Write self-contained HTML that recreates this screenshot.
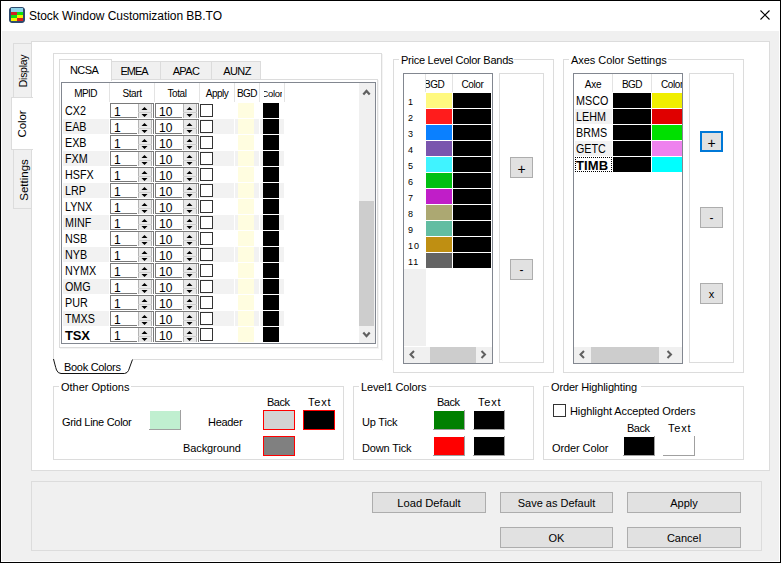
<!DOCTYPE html><html><head><meta charset="utf-8"><style>
html,body{margin:0;padding:0;width:781px;height:563px;overflow:hidden;background:#f0f0f0}
.a{position:absolute;box-sizing:border-box}
.t{font-family:"Liberation Sans",sans-serif;color:#000;white-space:nowrap}
svg{position:absolute;left:0;top:0}
</style></head><body>
<div class="a" style="left:0px;top:0px;width:781px;height:563px;background:#f0f0f0;"></div>
<div class="a" style="left:0px;top:0px;width:781px;height:31px;background:#fff;"></div>
<div class="a" style="left:1px;top:31px;width:1px;height:531px;background:#fff;"></div>
<div class="a" style="left:779px;top:31px;width:1px;height:531px;background:#fff;"></div>
<div class="a" style="left:1px;top:561px;width:779px;height:1px;background:#fff;"></div>
<div class="a" style="left:0px;top:0px;width:781px;height:1px;background:#000;"></div>
<div class="a" style="left:0px;top:0px;width:1px;height:563px;background:#000;"></div>
<div class="a" style="left:780px;top:0px;width:1px;height:563px;background:#000;"></div>
<div class="a" style="left:0px;top:562px;width:781px;height:1px;background:#000;"></div>
<svg width="781" height="563" style="position:absolute;left:0;top:0">
<rect x="9.5" y="7.5" width="15" height="15" rx="2.5" ry="2.5" fill="#2f4b6e" stroke="#2f4b6e"/>
<rect x="11" y="8" width="12" height="4" fill="#8fd3ea"/>
<rect x="11" y="12" width="6" height="3" fill="#d42020"/><rect x="17" y="12" width="6" height="3" fill="#10e010"/>
<rect x="11" y="15" width="6" height="3" fill="#10e010"/><rect x="17" y="15" width="6" height="3" fill="#f5f000"/>
<rect x="11" y="18" width="6" height="3" fill="#f5f000"/><rect x="17" y="18" width="6" height="3" fill="#d42020"/>
<path d="M760.5 10.5 L769.5 19.5 M769.5 10.5 L760.5 19.5" stroke="#000" stroke-width="1.1" fill="none"/>
</svg>
<div class="a t" style="left:29px;top:8.84px;font-size:12px;line-height:14px;letter-spacing:-0.05px">Stock Window Customization BB.TO</div>
<div class="a" style="left:13px;top:43px;width:19px;height:55px;background:#f0f0f0;border:1px solid #dcdcdc;"></div>
<div class="a" style="left:13px;top:149px;width:19px;height:60px;background:#f0f0f0;border:1px solid #dcdcdc;"></div>
<div class="a" style="left:31px;top:41px;width:739px;height:430px;background:#fff;border:1px solid #dcdcdc;"></div>
<div class="a" style="left:11px;top:97px;width:22px;height:53px;background:#fff;border:1px solid #dcdcdc;border-right:none;"></div>
<div class="a t" style="left:-27px;top:64px;width:100px;height:14px;line-height:14px;text-align:center;font-size:10.5px;transform:rotate(-90deg);letter-spacing:-0.3px">Display</div>
<div class="a t" style="left:-28px;top:117px;width:100px;height:14px;line-height:14px;text-align:center;font-size:11.5px;transform:rotate(-90deg);letter-spacing:-0.1px">Color</div>
<div class="a t" style="left:-26px;top:173px;width:100px;height:14px;line-height:14px;text-align:center;font-size:11.5px;transform:rotate(-90deg);letter-spacing:0px">Settings</div>
<div class="a" style="left:53px;top:53px;width:329px;height:307px;background:#fff;border:1px solid #dcdcdc;"></div>
<div class="a" style="left:382px;top:54px;width:1px;height:307px;background:#f4f4f4;"></div>
<svg width="781" height="563" style="position:absolute;left:0;top:0">
<rect x="54" y="359" width="79" height="2" fill="#fff"/>
<path d="M53.5 359 C54.5 363 55.5 367 56.5 370 Q58 373.5 61 373.5 L124.5 373.5 Q127.5 373 128.5 370.5 L132.5 359.5" stroke="#111" stroke-width="1" fill="#fff"/>
</svg>
<div class="a t" style="left:64px;top:360.69px;font-size:11px;line-height:13px;letter-spacing:-0.3px">Book Colors</div>
<div class="a" style="left:111px;top:61px;width:50px;height:19px;background:#f0f0f0;border:1px solid #dcdcdc;"></div>
<div class="a" style="left:160px;top:61px;width:52px;height:19px;background:#f0f0f0;border:1px solid #dcdcdc;"></div>
<div class="a" style="left:211px;top:61px;width:50px;height:19px;background:#f0f0f0;border:1px solid #dcdcdc;"></div>
<div class="a" style="left:59px;top:79px;width:319px;height:269px;background:#fff;border:1px solid #dcdcdc;"></div>
<div class="a" style="left:378px;top:80px;width:1px;height:269px;background:#f4f4f4;"></div>
<div class="a" style="left:60px;top:348px;width:319px;height:1px;background:#f4f4f4;"></div>
<div class="a" style="left:59px;top:59px;width:53px;height:22px;background:#fff;border:1px solid #dcdcdc;border-bottom:none;"></div>
<div class="a t" style="left:70px;top:63.69px;font-size:11px;line-height:13px;letter-spacing:-0.6px">NCSA</div>
<div class="a t" style="left:109px;width:50px;text-align:center;top:64.69px;font-size:11px;line-height:13px;letter-spacing:-1.1px">EMEA</div>
<div class="a t" style="left:161px;width:50px;text-align:center;top:64.69px;font-size:11px;line-height:13px;letter-spacing:-0.6px">APAC</div>
<div class="a t" style="left:213px;width:48px;text-align:center;top:64.69px;font-size:11px;line-height:13px;letter-spacing:-0.6px">AUNZ</div>
<div class="a" style="left:61px;top:82px;width:315px;height:262px;background:#fff;border:1px solid #828790;"></div>
<div class="a" style="left:109px;top:83px;width:1px;height:19px;background:#e3e3e3;"></div>
<div class="a" style="left:154px;top:83px;width:1px;height:19px;background:#e3e3e3;"></div>
<div class="a" style="left:199px;top:83px;width:1px;height:19px;background:#e3e3e3;"></div>
<div class="a" style="left:234px;top:83px;width:1px;height:19px;background:#e3e3e3;"></div>
<div class="a" style="left:259px;top:83px;width:1px;height:19px;background:#e3e3e3;"></div>
<div class="a" style="left:284px;top:83px;width:1px;height:19px;background:#e3e3e3;"></div>
<div class="a t" style="left:62px;width:47px;text-align:center;top:87.53px;font-size:10px;line-height:12px;letter-spacing:-0.6px">MPID</div>
<div class="a t" style="left:110px;width:44px;text-align:center;top:87.53px;font-size:10px;line-height:12px;letter-spacing:-0.4px">Start</div>
<div class="a t" style="left:155px;width:44px;text-align:center;top:87.53px;font-size:10px;line-height:12px;letter-spacing:-0.4px">Total</div>
<div class="a t" style="left:200px;width:34px;text-align:center;top:87.53px;font-size:10px;line-height:12px;letter-spacing:-0.5px">Apply</div>
<div class="a t" style="left:235px;width:24px;text-align:center;top:87.53px;font-size:10px;line-height:12px;letter-spacing:-0.5px">BGD</div>
<div class="a" style="left:264px;top:84px;width:18px;height:17px;overflow:hidden"><div class="a t" style="left:-2.5px;top:3.5px;font-size:9.5px;line-height:11px;letter-spacing:-0.3px">Color</div></div>
<div class="a t" style="left:65px;top:104.17px;font-size:12.5px;line-height:15px;transform:scaleX(0.86);transform-origin:0 0;">CX2</div>
<div class="a" style="left:110px;top:103px;width:44px;height:15px;background:#fff;border:1px solid #7a7a7a;border-bottom:none;"></div>
<div class="a" style="left:110px;top:117px;width:27px;height:1px;background:#7a7a7a;"></div>
<div class="a" style="left:138px;top:104px;width:14px;height:14px;background:#e9e9e9;"></div>
<div class="a" style="left:138px;top:104px;width:1px;height:14px;background:#b4b4b4;"></div>
<div class="a" style="left:151px;top:104px;width:1px;height:14px;background:#b4b4b4;"></div>
<div class="a" style="left:138px;top:112px;width:14px;height:1px;background:#cfcfcf;"></div>
<svg width="781" height="563"><path d="M141.5 110 L144.5 107 L147.5 110 Z M141.5 114 L144.5 117 L147.5 114 Z" fill="#000"/></svg>
<div class="a t" style="left:114px;top:104.84px;font-size:12px;line-height:14px;">1</div>
<div class="a" style="left:155px;top:103px;width:44px;height:15px;background:#fff;border:1px solid #7a7a7a;border-bottom:none;"></div>
<div class="a" style="left:155px;top:117px;width:27px;height:1px;background:#7a7a7a;"></div>
<div class="a" style="left:183px;top:104px;width:14px;height:14px;background:#e9e9e9;"></div>
<div class="a" style="left:183px;top:104px;width:1px;height:14px;background:#b4b4b4;"></div>
<div class="a" style="left:196px;top:104px;width:1px;height:14px;background:#b4b4b4;"></div>
<div class="a" style="left:183px;top:112px;width:14px;height:1px;background:#cfcfcf;"></div>
<svg width="781" height="563"><path d="M186.5 110 L189.5 107 L192.5 110 Z M186.5 114 L189.5 117 L192.5 114 Z" fill="#000"/></svg>
<div class="a t" style="left:159px;top:104.84px;font-size:12px;line-height:14px;">10</div>
<div class="a" style="left:200px;top:104px;width:13px;height:13px;background:#fff;border:1px solid #333;"></div>
<div class="a" style="left:238px;top:103px;width:16px;height:15px;background:#fffde0;"></div>
<div class="a" style="left:263px;top:103px;width:16px;height:15px;background:#000;"></div>
<div class="a" style="left:63px;top:119px;width:46px;height:15px;background:#f2f2f2;"></div>
<div class="a" style="left:110px;top:119px;width:44px;height:15px;background:#f2f2f2;"></div>
<div class="a" style="left:155px;top:119px;width:44px;height:15px;background:#f2f2f2;"></div>
<div class="a" style="left:200px;top:119px;width:34px;height:15px;background:#f2f2f2;"></div>
<div class="a" style="left:235px;top:119px;width:24px;height:15px;background:#f2f2f2;"></div>
<div class="a" style="left:260px;top:119px;width:24px;height:15px;background:#f2f2f2;"></div>
<div class="a t" style="left:65px;top:120.17px;font-size:12.5px;line-height:15px;transform:scaleX(0.86);transform-origin:0 0;">EAB</div>
<div class="a" style="left:110px;top:119px;width:44px;height:15px;background:#fff;border:1px solid #7a7a7a;border-bottom:none;"></div>
<div class="a" style="left:110px;top:133px;width:27px;height:1px;background:#7a7a7a;"></div>
<div class="a" style="left:138px;top:120px;width:14px;height:14px;background:#e9e9e9;"></div>
<div class="a" style="left:138px;top:120px;width:1px;height:14px;background:#b4b4b4;"></div>
<div class="a" style="left:151px;top:120px;width:1px;height:14px;background:#b4b4b4;"></div>
<div class="a" style="left:138px;top:128px;width:14px;height:1px;background:#cfcfcf;"></div>
<svg width="781" height="563"><path d="M141.5 126 L144.5 123 L147.5 126 Z M141.5 130 L144.5 133 L147.5 130 Z" fill="#000"/></svg>
<div class="a t" style="left:114px;top:120.84px;font-size:12px;line-height:14px;">1</div>
<div class="a" style="left:155px;top:119px;width:44px;height:15px;background:#fff;border:1px solid #7a7a7a;border-bottom:none;"></div>
<div class="a" style="left:155px;top:133px;width:27px;height:1px;background:#7a7a7a;"></div>
<div class="a" style="left:183px;top:120px;width:14px;height:14px;background:#e9e9e9;"></div>
<div class="a" style="left:183px;top:120px;width:1px;height:14px;background:#b4b4b4;"></div>
<div class="a" style="left:196px;top:120px;width:1px;height:14px;background:#b4b4b4;"></div>
<div class="a" style="left:183px;top:128px;width:14px;height:1px;background:#cfcfcf;"></div>
<svg width="781" height="563"><path d="M186.5 126 L189.5 123 L192.5 126 Z M186.5 130 L189.5 133 L192.5 130 Z" fill="#000"/></svg>
<div class="a t" style="left:159px;top:120.84px;font-size:12px;line-height:14px;">10</div>
<div class="a" style="left:200px;top:120px;width:13px;height:13px;background:#fff;border:1px solid #333;"></div>
<div class="a" style="left:238px;top:119px;width:16px;height:15px;background:#fffde0;"></div>
<div class="a" style="left:263px;top:119px;width:16px;height:15px;background:#000;"></div>
<div class="a t" style="left:65px;top:136.17px;font-size:12.5px;line-height:15px;transform:scaleX(0.86);transform-origin:0 0;">EXB</div>
<div class="a" style="left:110px;top:135px;width:44px;height:15px;background:#fff;border:1px solid #7a7a7a;border-bottom:none;"></div>
<div class="a" style="left:110px;top:149px;width:27px;height:1px;background:#7a7a7a;"></div>
<div class="a" style="left:138px;top:136px;width:14px;height:14px;background:#e9e9e9;"></div>
<div class="a" style="left:138px;top:136px;width:1px;height:14px;background:#b4b4b4;"></div>
<div class="a" style="left:151px;top:136px;width:1px;height:14px;background:#b4b4b4;"></div>
<div class="a" style="left:138px;top:144px;width:14px;height:1px;background:#cfcfcf;"></div>
<svg width="781" height="563"><path d="M141.5 142 L144.5 139 L147.5 142 Z M141.5 146 L144.5 149 L147.5 146 Z" fill="#000"/></svg>
<div class="a t" style="left:114px;top:136.84px;font-size:12px;line-height:14px;">1</div>
<div class="a" style="left:155px;top:135px;width:44px;height:15px;background:#fff;border:1px solid #7a7a7a;border-bottom:none;"></div>
<div class="a" style="left:155px;top:149px;width:27px;height:1px;background:#7a7a7a;"></div>
<div class="a" style="left:183px;top:136px;width:14px;height:14px;background:#e9e9e9;"></div>
<div class="a" style="left:183px;top:136px;width:1px;height:14px;background:#b4b4b4;"></div>
<div class="a" style="left:196px;top:136px;width:1px;height:14px;background:#b4b4b4;"></div>
<div class="a" style="left:183px;top:144px;width:14px;height:1px;background:#cfcfcf;"></div>
<svg width="781" height="563"><path d="M186.5 142 L189.5 139 L192.5 142 Z M186.5 146 L189.5 149 L192.5 146 Z" fill="#000"/></svg>
<div class="a t" style="left:159px;top:136.84px;font-size:12px;line-height:14px;">10</div>
<div class="a" style="left:200px;top:136px;width:13px;height:13px;background:#fff;border:1px solid #333;"></div>
<div class="a" style="left:238px;top:135px;width:16px;height:15px;background:#fffde0;"></div>
<div class="a" style="left:263px;top:135px;width:16px;height:15px;background:#000;"></div>
<div class="a" style="left:63px;top:151px;width:46px;height:15px;background:#f2f2f2;"></div>
<div class="a" style="left:110px;top:151px;width:44px;height:15px;background:#f2f2f2;"></div>
<div class="a" style="left:155px;top:151px;width:44px;height:15px;background:#f2f2f2;"></div>
<div class="a" style="left:200px;top:151px;width:34px;height:15px;background:#f2f2f2;"></div>
<div class="a" style="left:235px;top:151px;width:24px;height:15px;background:#f2f2f2;"></div>
<div class="a" style="left:260px;top:151px;width:24px;height:15px;background:#f2f2f2;"></div>
<div class="a t" style="left:65px;top:152.17px;font-size:12.5px;line-height:15px;transform:scaleX(0.86);transform-origin:0 0;">FXM</div>
<div class="a" style="left:110px;top:151px;width:44px;height:15px;background:#fff;border:1px solid #7a7a7a;border-bottom:none;"></div>
<div class="a" style="left:110px;top:165px;width:27px;height:1px;background:#7a7a7a;"></div>
<div class="a" style="left:138px;top:152px;width:14px;height:14px;background:#e9e9e9;"></div>
<div class="a" style="left:138px;top:152px;width:1px;height:14px;background:#b4b4b4;"></div>
<div class="a" style="left:151px;top:152px;width:1px;height:14px;background:#b4b4b4;"></div>
<div class="a" style="left:138px;top:160px;width:14px;height:1px;background:#cfcfcf;"></div>
<svg width="781" height="563"><path d="M141.5 158 L144.5 155 L147.5 158 Z M141.5 162 L144.5 165 L147.5 162 Z" fill="#000"/></svg>
<div class="a t" style="left:114px;top:152.84px;font-size:12px;line-height:14px;">1</div>
<div class="a" style="left:155px;top:151px;width:44px;height:15px;background:#fff;border:1px solid #7a7a7a;border-bottom:none;"></div>
<div class="a" style="left:155px;top:165px;width:27px;height:1px;background:#7a7a7a;"></div>
<div class="a" style="left:183px;top:152px;width:14px;height:14px;background:#e9e9e9;"></div>
<div class="a" style="left:183px;top:152px;width:1px;height:14px;background:#b4b4b4;"></div>
<div class="a" style="left:196px;top:152px;width:1px;height:14px;background:#b4b4b4;"></div>
<div class="a" style="left:183px;top:160px;width:14px;height:1px;background:#cfcfcf;"></div>
<svg width="781" height="563"><path d="M186.5 158 L189.5 155 L192.5 158 Z M186.5 162 L189.5 165 L192.5 162 Z" fill="#000"/></svg>
<div class="a t" style="left:159px;top:152.84px;font-size:12px;line-height:14px;">10</div>
<div class="a" style="left:200px;top:152px;width:13px;height:13px;background:#fff;border:1px solid #333;"></div>
<div class="a" style="left:238px;top:151px;width:16px;height:15px;background:#fffde0;"></div>
<div class="a" style="left:263px;top:151px;width:16px;height:15px;background:#000;"></div>
<div class="a t" style="left:65px;top:168.17px;font-size:12.5px;line-height:15px;transform:scaleX(0.86);transform-origin:0 0;">HSFX</div>
<div class="a" style="left:110px;top:167px;width:44px;height:15px;background:#fff;border:1px solid #7a7a7a;border-bottom:none;"></div>
<div class="a" style="left:110px;top:181px;width:27px;height:1px;background:#7a7a7a;"></div>
<div class="a" style="left:138px;top:168px;width:14px;height:14px;background:#e9e9e9;"></div>
<div class="a" style="left:138px;top:168px;width:1px;height:14px;background:#b4b4b4;"></div>
<div class="a" style="left:151px;top:168px;width:1px;height:14px;background:#b4b4b4;"></div>
<div class="a" style="left:138px;top:176px;width:14px;height:1px;background:#cfcfcf;"></div>
<svg width="781" height="563"><path d="M141.5 174 L144.5 171 L147.5 174 Z M141.5 178 L144.5 181 L147.5 178 Z" fill="#000"/></svg>
<div class="a t" style="left:114px;top:168.84px;font-size:12px;line-height:14px;">1</div>
<div class="a" style="left:155px;top:167px;width:44px;height:15px;background:#fff;border:1px solid #7a7a7a;border-bottom:none;"></div>
<div class="a" style="left:155px;top:181px;width:27px;height:1px;background:#7a7a7a;"></div>
<div class="a" style="left:183px;top:168px;width:14px;height:14px;background:#e9e9e9;"></div>
<div class="a" style="left:183px;top:168px;width:1px;height:14px;background:#b4b4b4;"></div>
<div class="a" style="left:196px;top:168px;width:1px;height:14px;background:#b4b4b4;"></div>
<div class="a" style="left:183px;top:176px;width:14px;height:1px;background:#cfcfcf;"></div>
<svg width="781" height="563"><path d="M186.5 174 L189.5 171 L192.5 174 Z M186.5 178 L189.5 181 L192.5 178 Z" fill="#000"/></svg>
<div class="a t" style="left:159px;top:168.84px;font-size:12px;line-height:14px;">10</div>
<div class="a" style="left:200px;top:168px;width:13px;height:13px;background:#fff;border:1px solid #333;"></div>
<div class="a" style="left:238px;top:167px;width:16px;height:15px;background:#fffde0;"></div>
<div class="a" style="left:263px;top:167px;width:16px;height:15px;background:#000;"></div>
<div class="a" style="left:63px;top:183px;width:46px;height:15px;background:#f2f2f2;"></div>
<div class="a" style="left:110px;top:183px;width:44px;height:15px;background:#f2f2f2;"></div>
<div class="a" style="left:155px;top:183px;width:44px;height:15px;background:#f2f2f2;"></div>
<div class="a" style="left:200px;top:183px;width:34px;height:15px;background:#f2f2f2;"></div>
<div class="a" style="left:235px;top:183px;width:24px;height:15px;background:#f2f2f2;"></div>
<div class="a" style="left:260px;top:183px;width:24px;height:15px;background:#f2f2f2;"></div>
<div class="a t" style="left:65px;top:184.17px;font-size:12.5px;line-height:15px;transform:scaleX(0.86);transform-origin:0 0;">LRP</div>
<div class="a" style="left:110px;top:183px;width:44px;height:15px;background:#fff;border:1px solid #7a7a7a;border-bottom:none;"></div>
<div class="a" style="left:110px;top:197px;width:27px;height:1px;background:#7a7a7a;"></div>
<div class="a" style="left:138px;top:184px;width:14px;height:14px;background:#e9e9e9;"></div>
<div class="a" style="left:138px;top:184px;width:1px;height:14px;background:#b4b4b4;"></div>
<div class="a" style="left:151px;top:184px;width:1px;height:14px;background:#b4b4b4;"></div>
<div class="a" style="left:138px;top:192px;width:14px;height:1px;background:#cfcfcf;"></div>
<svg width="781" height="563"><path d="M141.5 190 L144.5 187 L147.5 190 Z M141.5 194 L144.5 197 L147.5 194 Z" fill="#000"/></svg>
<div class="a t" style="left:114px;top:184.84px;font-size:12px;line-height:14px;">1</div>
<div class="a" style="left:155px;top:183px;width:44px;height:15px;background:#fff;border:1px solid #7a7a7a;border-bottom:none;"></div>
<div class="a" style="left:155px;top:197px;width:27px;height:1px;background:#7a7a7a;"></div>
<div class="a" style="left:183px;top:184px;width:14px;height:14px;background:#e9e9e9;"></div>
<div class="a" style="left:183px;top:184px;width:1px;height:14px;background:#b4b4b4;"></div>
<div class="a" style="left:196px;top:184px;width:1px;height:14px;background:#b4b4b4;"></div>
<div class="a" style="left:183px;top:192px;width:14px;height:1px;background:#cfcfcf;"></div>
<svg width="781" height="563"><path d="M186.5 190 L189.5 187 L192.5 190 Z M186.5 194 L189.5 197 L192.5 194 Z" fill="#000"/></svg>
<div class="a t" style="left:159px;top:184.84px;font-size:12px;line-height:14px;">10</div>
<div class="a" style="left:200px;top:184px;width:13px;height:13px;background:#fff;border:1px solid #333;"></div>
<div class="a" style="left:238px;top:183px;width:16px;height:15px;background:#fffde0;"></div>
<div class="a" style="left:263px;top:183px;width:16px;height:15px;background:#000;"></div>
<div class="a t" style="left:65px;top:200.17px;font-size:12.5px;line-height:15px;transform:scaleX(0.86);transform-origin:0 0;">LYNX</div>
<div class="a" style="left:110px;top:199px;width:44px;height:15px;background:#fff;border:1px solid #7a7a7a;border-bottom:none;"></div>
<div class="a" style="left:110px;top:213px;width:27px;height:1px;background:#7a7a7a;"></div>
<div class="a" style="left:138px;top:200px;width:14px;height:14px;background:#e9e9e9;"></div>
<div class="a" style="left:138px;top:200px;width:1px;height:14px;background:#b4b4b4;"></div>
<div class="a" style="left:151px;top:200px;width:1px;height:14px;background:#b4b4b4;"></div>
<div class="a" style="left:138px;top:208px;width:14px;height:1px;background:#cfcfcf;"></div>
<svg width="781" height="563"><path d="M141.5 206 L144.5 203 L147.5 206 Z M141.5 210 L144.5 213 L147.5 210 Z" fill="#000"/></svg>
<div class="a t" style="left:114px;top:200.84px;font-size:12px;line-height:14px;">1</div>
<div class="a" style="left:155px;top:199px;width:44px;height:15px;background:#fff;border:1px solid #7a7a7a;border-bottom:none;"></div>
<div class="a" style="left:155px;top:213px;width:27px;height:1px;background:#7a7a7a;"></div>
<div class="a" style="left:183px;top:200px;width:14px;height:14px;background:#e9e9e9;"></div>
<div class="a" style="left:183px;top:200px;width:1px;height:14px;background:#b4b4b4;"></div>
<div class="a" style="left:196px;top:200px;width:1px;height:14px;background:#b4b4b4;"></div>
<div class="a" style="left:183px;top:208px;width:14px;height:1px;background:#cfcfcf;"></div>
<svg width="781" height="563"><path d="M186.5 206 L189.5 203 L192.5 206 Z M186.5 210 L189.5 213 L192.5 210 Z" fill="#000"/></svg>
<div class="a t" style="left:159px;top:200.84px;font-size:12px;line-height:14px;">10</div>
<div class="a" style="left:200px;top:200px;width:13px;height:13px;background:#fff;border:1px solid #333;"></div>
<div class="a" style="left:238px;top:199px;width:16px;height:15px;background:#fffde0;"></div>
<div class="a" style="left:263px;top:199px;width:16px;height:15px;background:#000;"></div>
<div class="a" style="left:63px;top:215px;width:46px;height:15px;background:#f2f2f2;"></div>
<div class="a" style="left:110px;top:215px;width:44px;height:15px;background:#f2f2f2;"></div>
<div class="a" style="left:155px;top:215px;width:44px;height:15px;background:#f2f2f2;"></div>
<div class="a" style="left:200px;top:215px;width:34px;height:15px;background:#f2f2f2;"></div>
<div class="a" style="left:235px;top:215px;width:24px;height:15px;background:#f2f2f2;"></div>
<div class="a" style="left:260px;top:215px;width:24px;height:15px;background:#f2f2f2;"></div>
<div class="a t" style="left:65px;top:216.17px;font-size:12.5px;line-height:15px;transform:scaleX(0.86);transform-origin:0 0;">MINF</div>
<div class="a" style="left:110px;top:215px;width:44px;height:15px;background:#fff;border:1px solid #7a7a7a;border-bottom:none;"></div>
<div class="a" style="left:110px;top:229px;width:27px;height:1px;background:#7a7a7a;"></div>
<div class="a" style="left:138px;top:216px;width:14px;height:14px;background:#e9e9e9;"></div>
<div class="a" style="left:138px;top:216px;width:1px;height:14px;background:#b4b4b4;"></div>
<div class="a" style="left:151px;top:216px;width:1px;height:14px;background:#b4b4b4;"></div>
<div class="a" style="left:138px;top:224px;width:14px;height:1px;background:#cfcfcf;"></div>
<svg width="781" height="563"><path d="M141.5 222 L144.5 219 L147.5 222 Z M141.5 226 L144.5 229 L147.5 226 Z" fill="#000"/></svg>
<div class="a t" style="left:114px;top:216.84px;font-size:12px;line-height:14px;">1</div>
<div class="a" style="left:155px;top:215px;width:44px;height:15px;background:#fff;border:1px solid #7a7a7a;border-bottom:none;"></div>
<div class="a" style="left:155px;top:229px;width:27px;height:1px;background:#7a7a7a;"></div>
<div class="a" style="left:183px;top:216px;width:14px;height:14px;background:#e9e9e9;"></div>
<div class="a" style="left:183px;top:216px;width:1px;height:14px;background:#b4b4b4;"></div>
<div class="a" style="left:196px;top:216px;width:1px;height:14px;background:#b4b4b4;"></div>
<div class="a" style="left:183px;top:224px;width:14px;height:1px;background:#cfcfcf;"></div>
<svg width="781" height="563"><path d="M186.5 222 L189.5 219 L192.5 222 Z M186.5 226 L189.5 229 L192.5 226 Z" fill="#000"/></svg>
<div class="a t" style="left:159px;top:216.84px;font-size:12px;line-height:14px;">10</div>
<div class="a" style="left:200px;top:216px;width:13px;height:13px;background:#fff;border:1px solid #333;"></div>
<div class="a" style="left:238px;top:215px;width:16px;height:15px;background:#fffde0;"></div>
<div class="a" style="left:263px;top:215px;width:16px;height:15px;background:#000;"></div>
<div class="a t" style="left:65px;top:232.17px;font-size:12.5px;line-height:15px;transform:scaleX(0.86);transform-origin:0 0;">NSB</div>
<div class="a" style="left:110px;top:231px;width:44px;height:15px;background:#fff;border:1px solid #7a7a7a;border-bottom:none;"></div>
<div class="a" style="left:110px;top:245px;width:27px;height:1px;background:#7a7a7a;"></div>
<div class="a" style="left:138px;top:232px;width:14px;height:14px;background:#e9e9e9;"></div>
<div class="a" style="left:138px;top:232px;width:1px;height:14px;background:#b4b4b4;"></div>
<div class="a" style="left:151px;top:232px;width:1px;height:14px;background:#b4b4b4;"></div>
<div class="a" style="left:138px;top:240px;width:14px;height:1px;background:#cfcfcf;"></div>
<svg width="781" height="563"><path d="M141.5 238 L144.5 235 L147.5 238 Z M141.5 242 L144.5 245 L147.5 242 Z" fill="#000"/></svg>
<div class="a t" style="left:114px;top:232.84px;font-size:12px;line-height:14px;">1</div>
<div class="a" style="left:155px;top:231px;width:44px;height:15px;background:#fff;border:1px solid #7a7a7a;border-bottom:none;"></div>
<div class="a" style="left:155px;top:245px;width:27px;height:1px;background:#7a7a7a;"></div>
<div class="a" style="left:183px;top:232px;width:14px;height:14px;background:#e9e9e9;"></div>
<div class="a" style="left:183px;top:232px;width:1px;height:14px;background:#b4b4b4;"></div>
<div class="a" style="left:196px;top:232px;width:1px;height:14px;background:#b4b4b4;"></div>
<div class="a" style="left:183px;top:240px;width:14px;height:1px;background:#cfcfcf;"></div>
<svg width="781" height="563"><path d="M186.5 238 L189.5 235 L192.5 238 Z M186.5 242 L189.5 245 L192.5 242 Z" fill="#000"/></svg>
<div class="a t" style="left:159px;top:232.84px;font-size:12px;line-height:14px;">10</div>
<div class="a" style="left:200px;top:232px;width:13px;height:13px;background:#fff;border:1px solid #333;"></div>
<div class="a" style="left:238px;top:231px;width:16px;height:15px;background:#fffde0;"></div>
<div class="a" style="left:263px;top:231px;width:16px;height:15px;background:#000;"></div>
<div class="a" style="left:63px;top:247px;width:46px;height:15px;background:#f2f2f2;"></div>
<div class="a" style="left:110px;top:247px;width:44px;height:15px;background:#f2f2f2;"></div>
<div class="a" style="left:155px;top:247px;width:44px;height:15px;background:#f2f2f2;"></div>
<div class="a" style="left:200px;top:247px;width:34px;height:15px;background:#f2f2f2;"></div>
<div class="a" style="left:235px;top:247px;width:24px;height:15px;background:#f2f2f2;"></div>
<div class="a" style="left:260px;top:247px;width:24px;height:15px;background:#f2f2f2;"></div>
<div class="a t" style="left:65px;top:248.17px;font-size:12.5px;line-height:15px;transform:scaleX(0.86);transform-origin:0 0;">NYB</div>
<div class="a" style="left:110px;top:247px;width:44px;height:15px;background:#fff;border:1px solid #7a7a7a;border-bottom:none;"></div>
<div class="a" style="left:110px;top:261px;width:27px;height:1px;background:#7a7a7a;"></div>
<div class="a" style="left:138px;top:248px;width:14px;height:14px;background:#e9e9e9;"></div>
<div class="a" style="left:138px;top:248px;width:1px;height:14px;background:#b4b4b4;"></div>
<div class="a" style="left:151px;top:248px;width:1px;height:14px;background:#b4b4b4;"></div>
<div class="a" style="left:138px;top:256px;width:14px;height:1px;background:#cfcfcf;"></div>
<svg width="781" height="563"><path d="M141.5 254 L144.5 251 L147.5 254 Z M141.5 258 L144.5 261 L147.5 258 Z" fill="#000"/></svg>
<div class="a t" style="left:114px;top:248.84px;font-size:12px;line-height:14px;">1</div>
<div class="a" style="left:155px;top:247px;width:44px;height:15px;background:#fff;border:1px solid #7a7a7a;border-bottom:none;"></div>
<div class="a" style="left:155px;top:261px;width:27px;height:1px;background:#7a7a7a;"></div>
<div class="a" style="left:183px;top:248px;width:14px;height:14px;background:#e9e9e9;"></div>
<div class="a" style="left:183px;top:248px;width:1px;height:14px;background:#b4b4b4;"></div>
<div class="a" style="left:196px;top:248px;width:1px;height:14px;background:#b4b4b4;"></div>
<div class="a" style="left:183px;top:256px;width:14px;height:1px;background:#cfcfcf;"></div>
<svg width="781" height="563"><path d="M186.5 254 L189.5 251 L192.5 254 Z M186.5 258 L189.5 261 L192.5 258 Z" fill="#000"/></svg>
<div class="a t" style="left:159px;top:248.84px;font-size:12px;line-height:14px;">10</div>
<div class="a" style="left:200px;top:248px;width:13px;height:13px;background:#fff;border:1px solid #333;"></div>
<div class="a" style="left:238px;top:247px;width:16px;height:15px;background:#fffde0;"></div>
<div class="a" style="left:263px;top:247px;width:16px;height:15px;background:#000;"></div>
<div class="a t" style="left:65px;top:264.17px;font-size:12.5px;line-height:15px;transform:scaleX(0.86);transform-origin:0 0;">NYMX</div>
<div class="a" style="left:110px;top:263px;width:44px;height:15px;background:#fff;border:1px solid #7a7a7a;border-bottom:none;"></div>
<div class="a" style="left:110px;top:277px;width:27px;height:1px;background:#7a7a7a;"></div>
<div class="a" style="left:138px;top:264px;width:14px;height:14px;background:#e9e9e9;"></div>
<div class="a" style="left:138px;top:264px;width:1px;height:14px;background:#b4b4b4;"></div>
<div class="a" style="left:151px;top:264px;width:1px;height:14px;background:#b4b4b4;"></div>
<div class="a" style="left:138px;top:272px;width:14px;height:1px;background:#cfcfcf;"></div>
<svg width="781" height="563"><path d="M141.5 270 L144.5 267 L147.5 270 Z M141.5 274 L144.5 277 L147.5 274 Z" fill="#000"/></svg>
<div class="a t" style="left:114px;top:264.84px;font-size:12px;line-height:14px;">1</div>
<div class="a" style="left:155px;top:263px;width:44px;height:15px;background:#fff;border:1px solid #7a7a7a;border-bottom:none;"></div>
<div class="a" style="left:155px;top:277px;width:27px;height:1px;background:#7a7a7a;"></div>
<div class="a" style="left:183px;top:264px;width:14px;height:14px;background:#e9e9e9;"></div>
<div class="a" style="left:183px;top:264px;width:1px;height:14px;background:#b4b4b4;"></div>
<div class="a" style="left:196px;top:264px;width:1px;height:14px;background:#b4b4b4;"></div>
<div class="a" style="left:183px;top:272px;width:14px;height:1px;background:#cfcfcf;"></div>
<svg width="781" height="563"><path d="M186.5 270 L189.5 267 L192.5 270 Z M186.5 274 L189.5 277 L192.5 274 Z" fill="#000"/></svg>
<div class="a t" style="left:159px;top:264.84px;font-size:12px;line-height:14px;">10</div>
<div class="a" style="left:200px;top:264px;width:13px;height:13px;background:#fff;border:1px solid #333;"></div>
<div class="a" style="left:238px;top:263px;width:16px;height:15px;background:#fffde0;"></div>
<div class="a" style="left:263px;top:263px;width:16px;height:15px;background:#000;"></div>
<div class="a" style="left:63px;top:279px;width:46px;height:15px;background:#f2f2f2;"></div>
<div class="a" style="left:110px;top:279px;width:44px;height:15px;background:#f2f2f2;"></div>
<div class="a" style="left:155px;top:279px;width:44px;height:15px;background:#f2f2f2;"></div>
<div class="a" style="left:200px;top:279px;width:34px;height:15px;background:#f2f2f2;"></div>
<div class="a" style="left:235px;top:279px;width:24px;height:15px;background:#f2f2f2;"></div>
<div class="a" style="left:260px;top:279px;width:24px;height:15px;background:#f2f2f2;"></div>
<div class="a t" style="left:65px;top:280.17px;font-size:12.5px;line-height:15px;transform:scaleX(0.86);transform-origin:0 0;">OMG</div>
<div class="a" style="left:110px;top:279px;width:44px;height:15px;background:#fff;border:1px solid #7a7a7a;border-bottom:none;"></div>
<div class="a" style="left:110px;top:293px;width:27px;height:1px;background:#7a7a7a;"></div>
<div class="a" style="left:138px;top:280px;width:14px;height:14px;background:#e9e9e9;"></div>
<div class="a" style="left:138px;top:280px;width:1px;height:14px;background:#b4b4b4;"></div>
<div class="a" style="left:151px;top:280px;width:1px;height:14px;background:#b4b4b4;"></div>
<div class="a" style="left:138px;top:288px;width:14px;height:1px;background:#cfcfcf;"></div>
<svg width="781" height="563"><path d="M141.5 286 L144.5 283 L147.5 286 Z M141.5 290 L144.5 293 L147.5 290 Z" fill="#000"/></svg>
<div class="a t" style="left:114px;top:280.84px;font-size:12px;line-height:14px;">1</div>
<div class="a" style="left:155px;top:279px;width:44px;height:15px;background:#fff;border:1px solid #7a7a7a;border-bottom:none;"></div>
<div class="a" style="left:155px;top:293px;width:27px;height:1px;background:#7a7a7a;"></div>
<div class="a" style="left:183px;top:280px;width:14px;height:14px;background:#e9e9e9;"></div>
<div class="a" style="left:183px;top:280px;width:1px;height:14px;background:#b4b4b4;"></div>
<div class="a" style="left:196px;top:280px;width:1px;height:14px;background:#b4b4b4;"></div>
<div class="a" style="left:183px;top:288px;width:14px;height:1px;background:#cfcfcf;"></div>
<svg width="781" height="563"><path d="M186.5 286 L189.5 283 L192.5 286 Z M186.5 290 L189.5 293 L192.5 290 Z" fill="#000"/></svg>
<div class="a t" style="left:159px;top:280.84px;font-size:12px;line-height:14px;">10</div>
<div class="a" style="left:200px;top:280px;width:13px;height:13px;background:#fff;border:1px solid #333;"></div>
<div class="a" style="left:238px;top:279px;width:16px;height:15px;background:#fffde0;"></div>
<div class="a" style="left:263px;top:279px;width:16px;height:15px;background:#000;"></div>
<div class="a t" style="left:65px;top:296.17px;font-size:12.5px;line-height:15px;transform:scaleX(0.86);transform-origin:0 0;">PUR</div>
<div class="a" style="left:110px;top:295px;width:44px;height:15px;background:#fff;border:1px solid #7a7a7a;border-bottom:none;"></div>
<div class="a" style="left:110px;top:309px;width:27px;height:1px;background:#7a7a7a;"></div>
<div class="a" style="left:138px;top:296px;width:14px;height:14px;background:#e9e9e9;"></div>
<div class="a" style="left:138px;top:296px;width:1px;height:14px;background:#b4b4b4;"></div>
<div class="a" style="left:151px;top:296px;width:1px;height:14px;background:#b4b4b4;"></div>
<div class="a" style="left:138px;top:304px;width:14px;height:1px;background:#cfcfcf;"></div>
<svg width="781" height="563"><path d="M141.5 302 L144.5 299 L147.5 302 Z M141.5 306 L144.5 309 L147.5 306 Z" fill="#000"/></svg>
<div class="a t" style="left:114px;top:296.84px;font-size:12px;line-height:14px;">1</div>
<div class="a" style="left:155px;top:295px;width:44px;height:15px;background:#fff;border:1px solid #7a7a7a;border-bottom:none;"></div>
<div class="a" style="left:155px;top:309px;width:27px;height:1px;background:#7a7a7a;"></div>
<div class="a" style="left:183px;top:296px;width:14px;height:14px;background:#e9e9e9;"></div>
<div class="a" style="left:183px;top:296px;width:1px;height:14px;background:#b4b4b4;"></div>
<div class="a" style="left:196px;top:296px;width:1px;height:14px;background:#b4b4b4;"></div>
<div class="a" style="left:183px;top:304px;width:14px;height:1px;background:#cfcfcf;"></div>
<svg width="781" height="563"><path d="M186.5 302 L189.5 299 L192.5 302 Z M186.5 306 L189.5 309 L192.5 306 Z" fill="#000"/></svg>
<div class="a t" style="left:159px;top:296.84px;font-size:12px;line-height:14px;">10</div>
<div class="a" style="left:200px;top:296px;width:13px;height:13px;background:#fff;border:1px solid #333;"></div>
<div class="a" style="left:238px;top:295px;width:16px;height:15px;background:#fffde0;"></div>
<div class="a" style="left:263px;top:295px;width:16px;height:15px;background:#000;"></div>
<div class="a" style="left:63px;top:311px;width:46px;height:15px;background:#f2f2f2;"></div>
<div class="a" style="left:110px;top:311px;width:44px;height:15px;background:#f2f2f2;"></div>
<div class="a" style="left:155px;top:311px;width:44px;height:15px;background:#f2f2f2;"></div>
<div class="a" style="left:200px;top:311px;width:34px;height:15px;background:#f2f2f2;"></div>
<div class="a" style="left:235px;top:311px;width:24px;height:15px;background:#f2f2f2;"></div>
<div class="a" style="left:260px;top:311px;width:24px;height:15px;background:#f2f2f2;"></div>
<div class="a t" style="left:65px;top:312.17px;font-size:12.5px;line-height:15px;transform:scaleX(0.86);transform-origin:0 0;">TMXS</div>
<div class="a" style="left:110px;top:311px;width:44px;height:15px;background:#fff;border:1px solid #7a7a7a;border-bottom:none;"></div>
<div class="a" style="left:110px;top:325px;width:27px;height:1px;background:#7a7a7a;"></div>
<div class="a" style="left:138px;top:312px;width:14px;height:14px;background:#e9e9e9;"></div>
<div class="a" style="left:138px;top:312px;width:1px;height:14px;background:#b4b4b4;"></div>
<div class="a" style="left:151px;top:312px;width:1px;height:14px;background:#b4b4b4;"></div>
<div class="a" style="left:138px;top:320px;width:14px;height:1px;background:#cfcfcf;"></div>
<svg width="781" height="563"><path d="M141.5 318 L144.5 315 L147.5 318 Z M141.5 322 L144.5 325 L147.5 322 Z" fill="#000"/></svg>
<div class="a t" style="left:114px;top:312.84px;font-size:12px;line-height:14px;">1</div>
<div class="a" style="left:155px;top:311px;width:44px;height:15px;background:#fff;border:1px solid #7a7a7a;border-bottom:none;"></div>
<div class="a" style="left:155px;top:325px;width:27px;height:1px;background:#7a7a7a;"></div>
<div class="a" style="left:183px;top:312px;width:14px;height:14px;background:#e9e9e9;"></div>
<div class="a" style="left:183px;top:312px;width:1px;height:14px;background:#b4b4b4;"></div>
<div class="a" style="left:196px;top:312px;width:1px;height:14px;background:#b4b4b4;"></div>
<div class="a" style="left:183px;top:320px;width:14px;height:1px;background:#cfcfcf;"></div>
<svg width="781" height="563"><path d="M186.5 318 L189.5 315 L192.5 318 Z M186.5 322 L189.5 325 L192.5 322 Z" fill="#000"/></svg>
<div class="a t" style="left:159px;top:312.84px;font-size:12px;line-height:14px;">10</div>
<div class="a" style="left:200px;top:312px;width:13px;height:13px;background:#fff;border:1px solid #333;"></div>
<div class="a" style="left:238px;top:311px;width:16px;height:15px;background:#fffde0;"></div>
<div class="a" style="left:263px;top:311px;width:16px;height:15px;background:#000;"></div>
<div class="a t" style="left:65px;top:327.50px;font-size:13px;line-height:16px;font-weight:bold;letter-spacing:-0.2px">TSX</div>
<div class="a" style="left:110px;top:327px;width:44px;height:15px;background:#fff;border:1px solid #7a7a7a;border-bottom:none;"></div>
<div class="a" style="left:110px;top:341px;width:27px;height:1px;background:#7a7a7a;"></div>
<div class="a" style="left:138px;top:328px;width:14px;height:14px;background:#e9e9e9;"></div>
<div class="a" style="left:138px;top:328px;width:1px;height:14px;background:#b4b4b4;"></div>
<div class="a" style="left:151px;top:328px;width:1px;height:14px;background:#b4b4b4;"></div>
<div class="a" style="left:138px;top:336px;width:14px;height:1px;background:#cfcfcf;"></div>
<svg width="781" height="563"><path d="M141.5 334 L144.5 331 L147.5 334 Z M141.5 338 L144.5 341 L147.5 338 Z" fill="#000"/></svg>
<div class="a t" style="left:114px;top:328.84px;font-size:12px;line-height:14px;">1</div>
<div class="a" style="left:155px;top:327px;width:44px;height:15px;background:#fff;border:1px solid #7a7a7a;border-bottom:none;"></div>
<div class="a" style="left:155px;top:341px;width:27px;height:1px;background:#7a7a7a;"></div>
<div class="a" style="left:183px;top:328px;width:14px;height:14px;background:#e9e9e9;"></div>
<div class="a" style="left:183px;top:328px;width:1px;height:14px;background:#b4b4b4;"></div>
<div class="a" style="left:196px;top:328px;width:1px;height:14px;background:#b4b4b4;"></div>
<div class="a" style="left:183px;top:336px;width:14px;height:1px;background:#cfcfcf;"></div>
<svg width="781" height="563"><path d="M186.5 334 L189.5 331 L192.5 334 Z M186.5 338 L189.5 341 L192.5 338 Z" fill="#000"/></svg>
<div class="a t" style="left:159px;top:328.84px;font-size:12px;line-height:14px;">10</div>
<div class="a" style="left:200px;top:328px;width:13px;height:13px;background:#fff;border:1px solid #333;"></div>
<div class="a" style="left:238px;top:327px;width:16px;height:15px;background:#fffde0;"></div>
<div class="a" style="left:263px;top:327px;width:16px;height:15px;background:#000;"></div>
<div class="a" style="left:359px;top:83px;width:16px;height:260px;background:#f0f0f0;"></div>
<div class="a" style="left:359px;top:201px;width:15px;height:125px;background:#cdcdcd;"></div>
<svg width="781" height="563">
<path d="M363.3 94.6 L366.5 91 L369.7 94.6" stroke="#606060" stroke-width="2.2" fill="none"/>
<path d="M363.3 332.6 L366.5 336.2 L369.7 332.6" stroke="#606060" stroke-width="2.2" fill="none"/>
</svg>
<div class="a" style="left:393px;top:59px;width:161px;height:314px;border:1px solid #dcdcdc;"></div>
<div class="a" style="left:399px;top:58px;width:115px;height:3px;background:#fff;"></div>
<div class="a t" style="left:401px;top:53.69px;font-size:11px;line-height:13px;letter-spacing:-0.25px">Price Level Color Bands</div>
<div class="a" style="left:403px;top:73px;width:90px;height:291px;background:#fff;border:1px solid #828790;"></div>
<div class="a" style="left:425px;top:74px;width:1px;height:18px;background:#e3e3e3;"></div>
<div class="a" style="left:452px;top:74px;width:1px;height:18px;background:#e3e3e3;"></div>
<div class="a" style="left:426px;top:74px;width:26px;height:18px;overflow:hidden"><div class="a t" style="left:-2px;top:4.5px;font-size:10px;line-height:12px;letter-spacing:-0.5px">BGD</div></div>
<div class="a t" style="left:453px;width:39px;text-align:center;top:78.53px;font-size:10px;line-height:12px;letter-spacing:-0.4px">Color</div>
<div class="a" style="left:426px;top:93px;width:26px;height:15px;background:#fff97f;"></div>
<div class="a" style="left:453px;top:93px;width:38px;height:15px;background:#000;"></div>
<div class="a t" style="left:408px;top:97.38px;font-size:9px;line-height:11px;">1</div>
<div class="a" style="left:426px;top:109px;width:26px;height:15px;background:#ff1c1c;"></div>
<div class="a" style="left:453px;top:109px;width:38px;height:15px;background:#000;"></div>
<div class="a t" style="left:408px;top:113.38px;font-size:9px;line-height:11px;">2</div>
<div class="a" style="left:426px;top:125px;width:26px;height:15px;background:#0a80ff;"></div>
<div class="a" style="left:453px;top:125px;width:38px;height:15px;background:#000;"></div>
<div class="a t" style="left:408px;top:129.38px;font-size:9px;line-height:11px;">3</div>
<div class="a" style="left:426px;top:141px;width:26px;height:15px;background:#7a55ae;"></div>
<div class="a" style="left:453px;top:141px;width:38px;height:15px;background:#000;"></div>
<div class="a t" style="left:408px;top:145.38px;font-size:9px;line-height:11px;">4</div>
<div class="a" style="left:426px;top:157px;width:26px;height:15px;background:#40f3ff;"></div>
<div class="a" style="left:453px;top:157px;width:38px;height:15px;background:#000;"></div>
<div class="a t" style="left:408px;top:161.38px;font-size:9px;line-height:11px;">5</div>
<div class="a" style="left:426px;top:173px;width:26px;height:15px;background:#00c012;"></div>
<div class="a" style="left:453px;top:173px;width:38px;height:15px;background:#000;"></div>
<div class="a t" style="left:408px;top:177.38px;font-size:9px;line-height:11px;">6</div>
<div class="a" style="left:426px;top:189px;width:26px;height:15px;background:#c01ec8;"></div>
<div class="a" style="left:453px;top:189px;width:38px;height:15px;background:#000;"></div>
<div class="a t" style="left:408px;top:193.38px;font-size:9px;line-height:11px;">7</div>
<div class="a" style="left:426px;top:205px;width:26px;height:15px;background:#aca872;"></div>
<div class="a" style="left:453px;top:205px;width:38px;height:15px;background:#000;"></div>
<div class="a t" style="left:408px;top:209.38px;font-size:9px;line-height:11px;">8</div>
<div class="a" style="left:426px;top:221px;width:26px;height:15px;background:#62bda2;"></div>
<div class="a" style="left:453px;top:221px;width:38px;height:15px;background:#000;"></div>
<div class="a t" style="left:408px;top:225.38px;font-size:9px;line-height:11px;">9</div>
<div class="a" style="left:426px;top:237px;width:26px;height:15px;background:#bf8f12;"></div>
<div class="a" style="left:453px;top:237px;width:38px;height:15px;background:#000;"></div>
<div class="a t" style="left:408px;top:241.38px;font-size:9px;line-height:11px;letter-spacing:1px">10</div>
<div class="a" style="left:426px;top:253px;width:26px;height:15px;background:#646464;"></div>
<div class="a" style="left:453px;top:253px;width:38px;height:15px;background:#000;"></div>
<div class="a t" style="left:408px;top:257.38px;font-size:9px;line-height:11px;letter-spacing:1px">11</div>
<div class="a" style="left:404px;top:269px;width:22px;height:77px;background:#f0f0f0;"></div>
<div class="a" style="left:404px;top:347px;width:88px;height:16px;background:#f0f0f0;"></div>
<div class="a" style="left:430px;top:347px;width:46px;height:16px;background:#cdcdcd;"></div>
<svg width="781" height="563">
<path d="M414 351 L410.5 354.5 L414 358" stroke="#606060" stroke-width="2" fill="none"/>
<path d="M481.5 351 L485 354.5 L481.5 358" stroke="#606060" stroke-width="2" fill="none"/>
</svg>
<div class="a" style="left:499px;top:73px;width:45px;height:290px;background:#fff;border:1px solid #dcdcdc;"></div>
<div class="a" style="left:510px;top:157px;width:23px;height:21px;background:#e1e1e1;border:1px solid #adadad;"></div>
<div class="a t" style="left:510px;width:23px;text-align:center;top:160.65px;font-size:14px;line-height:17px;">+</div>
<div class="a" style="left:510px;top:259px;width:23px;height:21px;background:#e1e1e1;border:1px solid #adadad;"></div>
<div class="a t" style="left:510px;width:23px;text-align:center;top:262.84px;font-size:12px;line-height:14px;">-</div>
<div class="a" style="left:563px;top:59px;width:181px;height:314px;border:1px solid #dcdcdc;"></div>
<div class="a" style="left:569px;top:58px;width:99px;height:3px;background:#fff;"></div>
<div class="a t" style="left:571px;top:53.69px;font-size:11px;line-height:13px;letter-spacing:-0.05px">Axes Color Settings</div>
<div class="a" style="left:573px;top:73px;width:110px;height:291px;background:#fff;border:1px solid #828790;"></div>
<div class="a" style="left:612px;top:74px;width:1px;height:18px;background:#e3e3e3;"></div>
<div class="a" style="left:651px;top:74px;width:1px;height:18px;background:#e3e3e3;"></div>
<div class="a t" style="left:574px;width:38px;text-align:center;top:78.53px;font-size:10px;line-height:12px;letter-spacing:-0.3px">Axe</div>
<div class="a t" style="left:613px;width:38px;text-align:center;top:78.53px;font-size:10px;line-height:12px;letter-spacing:-0.5px">BGD</div>
<div class="a" style="left:652px;top:74px;width:30px;height:18px;overflow:hidden"><div class="a t" style="left:9px;top:4.5px;font-size:10px;line-height:12px;letter-spacing:-0.4px">Color</div></div>
<div class="a" style="left:613px;top:93px;width:38px;height:15px;background:#000;"></div>
<div class="a" style="left:652px;top:93px;width:30px;height:15px;background:#f0ee00;"></div>
<div class="a t" style="left:576px;top:94.17px;font-size:12.5px;line-height:15px;transform:scaleX(0.86);transform-origin:0 0;">MSCO</div>
<div class="a" style="left:575px;top:109px;width:37px;height:15px;background:#f2f2f2;"></div>
<div class="a" style="left:613px;top:109px;width:38px;height:15px;background:#000;"></div>
<div class="a" style="left:652px;top:109px;width:30px;height:15px;background:#e00000;"></div>
<div class="a t" style="left:576px;top:110.17px;font-size:12.5px;line-height:15px;transform:scaleX(0.86);transform-origin:0 0;">LEHM</div>
<div class="a" style="left:613px;top:125px;width:38px;height:15px;background:#000;"></div>
<div class="a" style="left:652px;top:125px;width:30px;height:15px;background:#00e000;"></div>
<div class="a t" style="left:576px;top:126.17px;font-size:12.5px;line-height:15px;transform:scaleX(0.86);transform-origin:0 0;">BRMS</div>
<div class="a" style="left:575px;top:141px;width:37px;height:15px;background:#f2f2f2;"></div>
<div class="a" style="left:613px;top:141px;width:38px;height:15px;background:#000;"></div>
<div class="a" style="left:652px;top:141px;width:30px;height:15px;background:#ee82ee;"></div>
<div class="a t" style="left:576px;top:142.17px;font-size:12.5px;line-height:15px;transform:scaleX(0.86);transform-origin:0 0;">GETC</div>
<div class="a" style="left:613px;top:157px;width:38px;height:15px;background:#000;"></div>
<div class="a" style="left:652px;top:157px;width:30px;height:15px;background:#00ffff;"></div>
<div class="a" style="left:575px;top:157px;width:37px;height:15px;border:1px solid #000;border-style:dotted;"></div>
<div class="a t" style="left:576px;top:157.50px;font-size:13px;line-height:16px;font-weight:bold;letter-spacing:0.1px">TIMB</div>
<div class="a" style="left:574px;top:347px;width:108px;height:16px;background:#f0f0f0;"></div>
<div class="a" style="left:591px;top:347px;width:68px;height:16px;background:#cdcdcd;"></div>
<svg width="781" height="563">
<path d="M584 351 L580.5 354.5 L584 358" stroke="#606060" stroke-width="2" fill="none"/>
<path d="M667.5 351 L671 354.5 L667.5 358" stroke="#606060" stroke-width="2" fill="none"/>
</svg>
<div class="a" style="left:689px;top:73px;width:45px;height:290px;background:#fff;border:1px solid #dcdcdc;"></div>
<div class="a" style="left:700px;top:131px;width:23px;height:21px;background:#e1e1e1;border:1px solid #0078d7;border-width:2px;"></div>
<div class="a t" style="left:700px;width:23px;text-align:center;top:134.65px;font-size:14px;line-height:17px;">+</div>
<div class="a" style="left:700px;top:207px;width:23px;height:21px;background:#e1e1e1;border:1px solid #adadad;"></div>
<div class="a t" style="left:700px;width:23px;text-align:center;top:210.84px;font-size:12px;line-height:14px;">-</div>
<div class="a" style="left:700px;top:283px;width:23px;height:21px;background:#e1e1e1;border:1px solid #adadad;"></div>
<div class="a t" style="left:700px;width:23px;text-align:center;top:287.69px;font-size:11px;line-height:13px;">x</div>
<div class="a" style="left:53px;top:386px;width:291px;height:74px;border:1px solid #dcdcdc;"></div>
<div class="a" style="left:59px;top:385px;width:72px;height:3px;background:#fff;"></div>
<div class="a t" style="left:61px;top:380.69px;font-size:11px;line-height:13px;letter-spacing:0px">Other Options</div>
<div class="a t" style="left:62px;top:415.69px;font-size:11px;line-height:13px;letter-spacing:-0.3px">Grid Line Color</div>
<div class="a" style="left:150px;top:411px;width:30px;height:18px;background:#c0efd0;"></div>
<div class="a" style="left:180px;top:410px;width:1px;height:20px;background:#a0a0a0;"></div>
<div class="a" style="left:149px;top:429px;width:32px;height:1px;background:#a0a0a0;"></div>
<div class="a t" style="left:208px;top:415.69px;font-size:11px;line-height:13px;letter-spacing:-0.3px">Header</div>
<div class="a t" style="left:183px;top:441.69px;font-size:11px;line-height:13px;letter-spacing:-0.1px">Background</div>
<div class="a t" style="left:267px;top:395.69px;font-size:11px;line-height:13px;letter-spacing:-0.5px">Back</div>
<div class="a t" style="left:308px;top:395.69px;font-size:11px;line-height:13px;letter-spacing:0.8px">Text</div>
<div class="a" style="left:263px;top:410px;width:32px;height:20px;background:#d3d3d3;border:1px solid #ff0000;"></div>
<div class="a" style="left:303px;top:410px;width:32px;height:20px;background:#000;border:1px solid #ff0000;"></div>
<div class="a" style="left:263px;top:436px;width:32px;height:20px;background:#808080;border:1px solid #ff0000;"></div>
<div class="a" style="left:353px;top:386px;width:181px;height:74px;border:1px solid #dcdcdc;"></div>
<div class="a" style="left:359px;top:385px;width:70px;height:3px;background:#fff;"></div>
<div class="a t" style="left:361px;top:380.69px;font-size:11px;line-height:13px;letter-spacing:-0.15px">Level1 Colors</div>
<div class="a t" style="left:437px;top:395.69px;font-size:11px;line-height:13px;letter-spacing:-0.5px">Back</div>
<div class="a t" style="left:478px;top:395.69px;font-size:11px;line-height:13px;letter-spacing:0.8px">Text</div>
<div class="a t" style="left:362px;top:415.69px;font-size:11px;line-height:13px;letter-spacing:-0.2px">Up Tick</div>
<div class="a t" style="left:362px;top:441.69px;font-size:11px;line-height:13px;letter-spacing:-0.15px">Down Tick</div>
<div class="a" style="left:434px;top:411px;width:30px;height:18px;background:#008000;"></div>
<div class="a" style="left:464px;top:410px;width:1px;height:20px;background:#a0a0a0;"></div>
<div class="a" style="left:433px;top:429px;width:32px;height:1px;background:#a0a0a0;"></div>
<div class="a" style="left:474px;top:411px;width:30px;height:18px;background:#000;"></div>
<div class="a" style="left:504px;top:410px;width:1px;height:20px;background:#a0a0a0;"></div>
<div class="a" style="left:473px;top:429px;width:32px;height:1px;background:#a0a0a0;"></div>
<div class="a" style="left:434px;top:437px;width:30px;height:18px;background:#ff0000;"></div>
<div class="a" style="left:464px;top:436px;width:1px;height:20px;background:#a0a0a0;"></div>
<div class="a" style="left:433px;top:455px;width:32px;height:1px;background:#a0a0a0;"></div>
<div class="a" style="left:474px;top:437px;width:30px;height:18px;background:#000;"></div>
<div class="a" style="left:504px;top:436px;width:1px;height:20px;background:#a0a0a0;"></div>
<div class="a" style="left:473px;top:455px;width:32px;height:1px;background:#a0a0a0;"></div>
<div class="a" style="left:543px;top:386px;width:201px;height:74px;border:1px solid #dcdcdc;"></div>
<div class="a" style="left:549px;top:385px;width:92px;height:3px;background:#fff;"></div>
<div class="a t" style="left:551px;top:380.69px;font-size:11px;line-height:13px;letter-spacing:-0.15px">Order Highlighting</div>
<div class="a" style="left:553px;top:404px;width:13px;height:13px;background:#fff;border:1px solid #333;"></div>
<div class="a t" style="left:570px;top:404.69px;font-size:11px;line-height:13px;letter-spacing:-0.1px">Highlight Accepted Orders</div>
<div class="a t" style="left:627px;top:421.69px;font-size:11px;line-height:13px;letter-spacing:-0.5px">Back</div>
<div class="a t" style="left:668px;top:421.69px;font-size:11px;line-height:13px;letter-spacing:0.8px">Text</div>
<div class="a t" style="left:552px;top:441.69px;font-size:11px;line-height:13px;letter-spacing:-0.1px">Order Color</div>
<div class="a" style="left:624px;top:437px;width:30px;height:18px;background:#000;"></div>
<div class="a" style="left:654px;top:436px;width:1px;height:20px;background:#a0a0a0;"></div>
<div class="a" style="left:623px;top:455px;width:32px;height:1px;background:#a0a0a0;"></div>
<div class="a" style="left:664px;top:437px;width:30px;height:18px;background:#fff;"></div>
<div class="a" style="left:694px;top:436px;width:1px;height:20px;background:#a0a0a0;"></div>
<div class="a" style="left:663px;top:455px;width:32px;height:1px;background:#a0a0a0;"></div>
<div class="a" style="left:31px;top:481px;width:731px;height:70px;border:1px solid #dcdcdc;"></div>
<div class="a" style="left:372px;top:492px;width:114px;height:21px;background:#e1e1e1;border:1px solid #adadad;"></div>
<div class="a t" style="left:372px;width:114px;text-align:center;top:496.62px;font-size:11.2px;line-height:13px;">Load Default</div>
<div class="a" style="left:500px;top:492px;width:113px;height:21px;background:#e1e1e1;border:1px solid #adadad;"></div>
<div class="a t" style="left:500px;width:113px;text-align:center;top:496.69px;font-size:11px;line-height:13px;">Save as Default</div>
<div class="a" style="left:627px;top:492px;width:114px;height:21px;background:#e1e1e1;border:1px solid #adadad;"></div>
<div class="a t" style="left:627px;width:114px;text-align:center;top:496.69px;font-size:11px;line-height:13px;">Apply</div>
<div class="a" style="left:500px;top:527px;width:113px;height:21px;background:#e1e1e1;border:1px solid #adadad;"></div>
<div class="a t" style="left:500px;width:113px;text-align:center;top:531.69px;font-size:11px;line-height:13px;">OK</div>
<div class="a" style="left:627px;top:527px;width:114px;height:21px;background:#e1e1e1;border:1px solid #adadad;"></div>
<div class="a t" style="left:627px;width:114px;text-align:center;top:531.69px;font-size:11px;line-height:13px;">Cancel</div>
</body></html>
